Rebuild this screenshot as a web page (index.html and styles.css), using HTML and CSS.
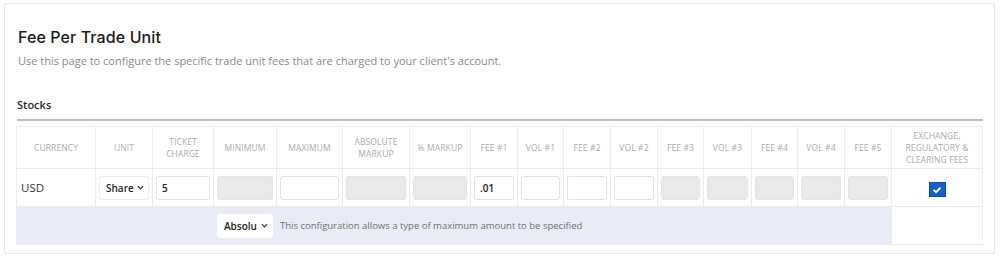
FILE: index.html
```html
<!DOCTYPE html>
<html>
<head>
<meta charset="utf-8">
<link rel="stylesheet" href="styles.css">
</head>
<body>
<div class="card">
  <h1 class="title">Fee Per Trade Unit</h1>
  <p class="subtitle">Use this page to configure the specific trade unit fees that are charged to your client's account.</p>
  <h2 class="section">Stocks</h2>
  <table class="fees">
    <colgroup>
      <col style="width:79px"><col style="width:57px"><col style="width:61px"><col style="width:63px"><col style="width:66px"><col style="width:67px"><col style="width:61px"><col style="width:47px"><col style="width:46px"><col style="width:47px"><col style="width:47px"><col style="width:46px"><col style="width:48px"><col style="width:46px"><col style="width:47px"><col style="width:47px"><col style="width:91px">
    </colgroup>
    <thead>
      <tr>
        <th>CURRENCY</th><th>UNIT</th><th>TICKET<br>CHARGE</th><th>MINIMUM</th><th>MAXIMUM</th><th>ABSOLUTE<br>MARKUP</th><th>% MARKUP</th><th>FEE #1</th><th>VOL #1</th><th>FEE #2</th><th>VOL #2</th><th>FEE #3</th><th>VOL #3</th><th>FEE #4</th><th>VOL #4</th><th>FEE #5</th><th>EXCHANGE,<br>REGULATORY &amp;<br>CLEARING FEES</th>
      </tr>
    </thead>
    <tbody>
      <tr class="row">
        <td class="cur">USD</td>
        <td><div class="select">Share<svg class="chev" viewBox="0 0 8 5"><path d="M1 1l3 3 3-3" /></svg></div></td>
        <td><div class="inp">5</div></td>
        <td><div class="inp dis"></div></td>
        <td><div class="inp"></div></td>
        <td><div class="inp dis"></div></td>
        <td><div class="inp dis"></div></td>
        <td><div class="inp">.01</div></td>
        <td><div class="inp"></div></td>
        <td><div class="inp"></div></td>
        <td><div class="inp"></div></td>
        <td><div class="inp dis"></div></td>
        <td><div class="inp dis"></div></td>
        <td><div class="inp dis"></div></td>
        <td><div class="inp dis"></div></td>
        <td><div class="inp dis"></div></td>
        <td class="chk"><span class="box"><svg viewBox="0 0 10 8"><path d="M1.5 3.8l2.6 2.4 4.4-4.6" /></svg></span></td>
      </tr>
      <tr class="sub">
        <td colspan="3" class="blue"></td>
        <td class="blue"><div class="select sel2">Absolu<svg class="chev" viewBox="0 0 8 5"><path d="M1 1l3 3 3-3" /></svg></div></td>
        <td colspan="12" class="blue msg">This configuration allows a type of maximum amount to be specified</td>
        <td></td>
      </tr>
    </tbody>
  </table>
</div>
</body>
</html>
```
FILE: styles.css
```css
html, body {
  margin: 0;
  padding: 0;
  background: #ffffff;
}
body {
  font-family: "Open Sans", "Liberation Sans", sans-serif;
  color: #222;
  padding: 3px 5px 0 4px;
}
.card {
  border: 1px solid #e6e6e6;
  border-radius: 2px;
  height: 251px;
  box-sizing: border-box;
  padding: 0 11px 0 11px;
}
.title {
  margin: 22px 0 0 2px;
  font-family: "Inter", "Open Sans", sans-serif;
  font-size: 16px;
  font-weight: 500;
  line-height: 22px;
  color: #1a1a1a;
  letter-spacing: 0.1px;
}
.subtitle {
  margin: 5px 0 0 2px;
  font-size: 11px;
  line-height: 16px;
  color: #8a8a8a;
}
.section {
  margin: 28px 0 0 1px;
  font-size: 11px;
  font-weight: 600;
  line-height: 16px;
  color: #2a2a2a;
  padding-bottom: 6px;
  border-bottom: 2px solid #bdbdbd;
}
.fees {
  margin-top: 5px;
  border-collapse: collapse;
  table-layout: fixed;
  width: 966px;
  border: 1px solid #e4e4e4;
}
.fees th {
  height: 41px;
  font-size: 8.5px;
  font-weight: 400;
  line-height: 12px;
  color: #ababab;
  text-align: center;
  border: 1px solid #ececec;
  padding: 0 2px;
  letter-spacing: 0.1px;
}
.fees td {
  border: 1px solid #ececec;
  padding: 0 3px;
  height: 37px;
  vertical-align: middle;
}
.fees td.cur {
  font-size: 11.5px;
  color: #333;
  padding-left: 4px;
}
.inp {
  height: 24px;
  box-sizing: border-box;
  border: 1px solid #e2e2e2;
  border-radius: 3px;
  background: #fff;
  font-size: 10px;
  font-weight: 600;
  line-height: 22px;
  padding-left: 5px;
  color: #222;
}
.inp.dis {
  background: #e9e9e9;
  border-color: #e4e4e4;
}
.select {
  height: 24px;
  box-sizing: border-box;
  border: 1px solid #ededed;
  border-radius: 3px;
  background: #fff;
  font-size: 10px;
  font-weight: 600;
  line-height: 22px;
  padding-left: 6px;
  color: #222;
  display: flex;
  align-items: center;
  justify-content: space-between;
  padding-right: 4px;
}
.chev {
  width: 7px;
  height: 5px;
  fill: none;
  stroke: #333;
  stroke-width: 1.4;
}
.fees td.blue {
  background: #e9ecf6;
  border-color: #e9ecf6;
}
.fees td.msg {
  font-size: 9.5px;
  color: #6f6f6f;
  padding-left: 3px;
}
.sel2 {
  border-color: #fff;
}
.chk {
  text-align: center;
}
.box {
  display: inline-block;
  width: 17px;
  height: 15px;
  background: #1560c8;
  border: 1px solid #0f4ea6;
  box-sizing: border-box;
  vertical-align: middle;
}
.box svg {
  width: 10px;
  height: 8px;
  margin-top: 3px;
  fill: none;
  stroke: #fff;
  stroke-width: 1.8;
  display: block;
  margin-left: 2.5px;
}
```
